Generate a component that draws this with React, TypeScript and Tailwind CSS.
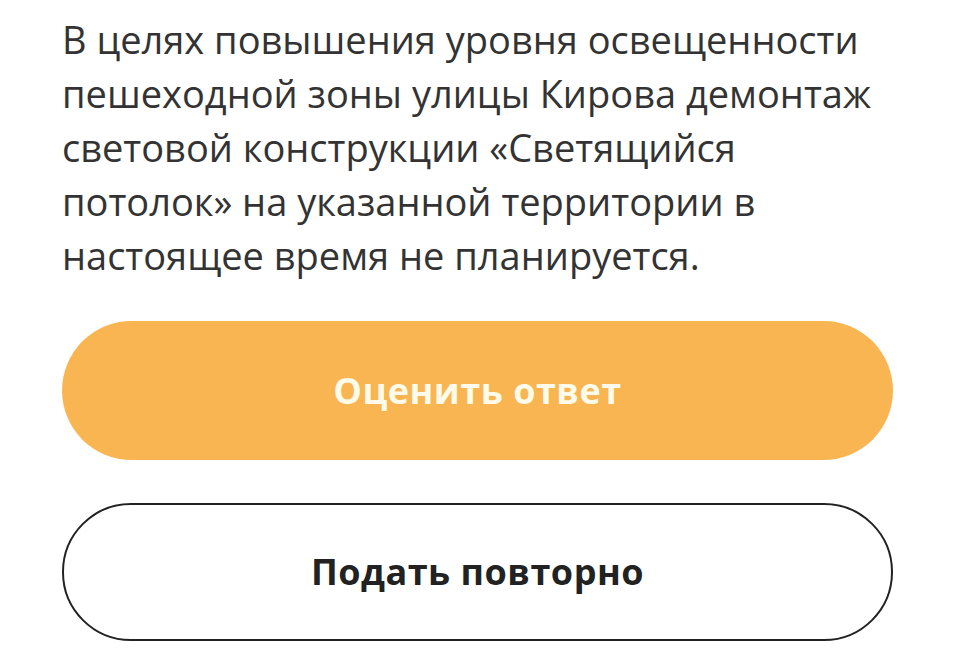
export default function App() {
  return (
    <div className="w-[957px] h-[650px] bg-white overflow-hidden" style={{ fontFamily: '"Open Sans", "Noto Sans", sans-serif' }}>
      <div className="pl-[62px] pr-[64px] pt-[12px]">
        <p className="text-[38px] leading-[54px] text-[#333333]">
          В целях повышения уровня освещенности пешеходной зоны улицы Кирова демонтаж световой конструкции «Светящийся потолок» на указанной территории в настоящее время не планируется.
        </p>
        <div className="flex flex-col gap-[43px] mt-[39px] w-[831px]">
          <button className="h-[139px] rounded-full bg-[#f9b551] text-[#fffbea] text-[36px] font-bold tracking-[0.5px]">
            Оценить ответ
          </button>
          <button className="h-[138px] rounded-full border-2 border-[#222222] bg-white text-[#222222] text-[36px] font-bold tracking-[0.5px]">
            Подать повторно
          </button>
        </div>
      </div>
    </div>
  );
}
